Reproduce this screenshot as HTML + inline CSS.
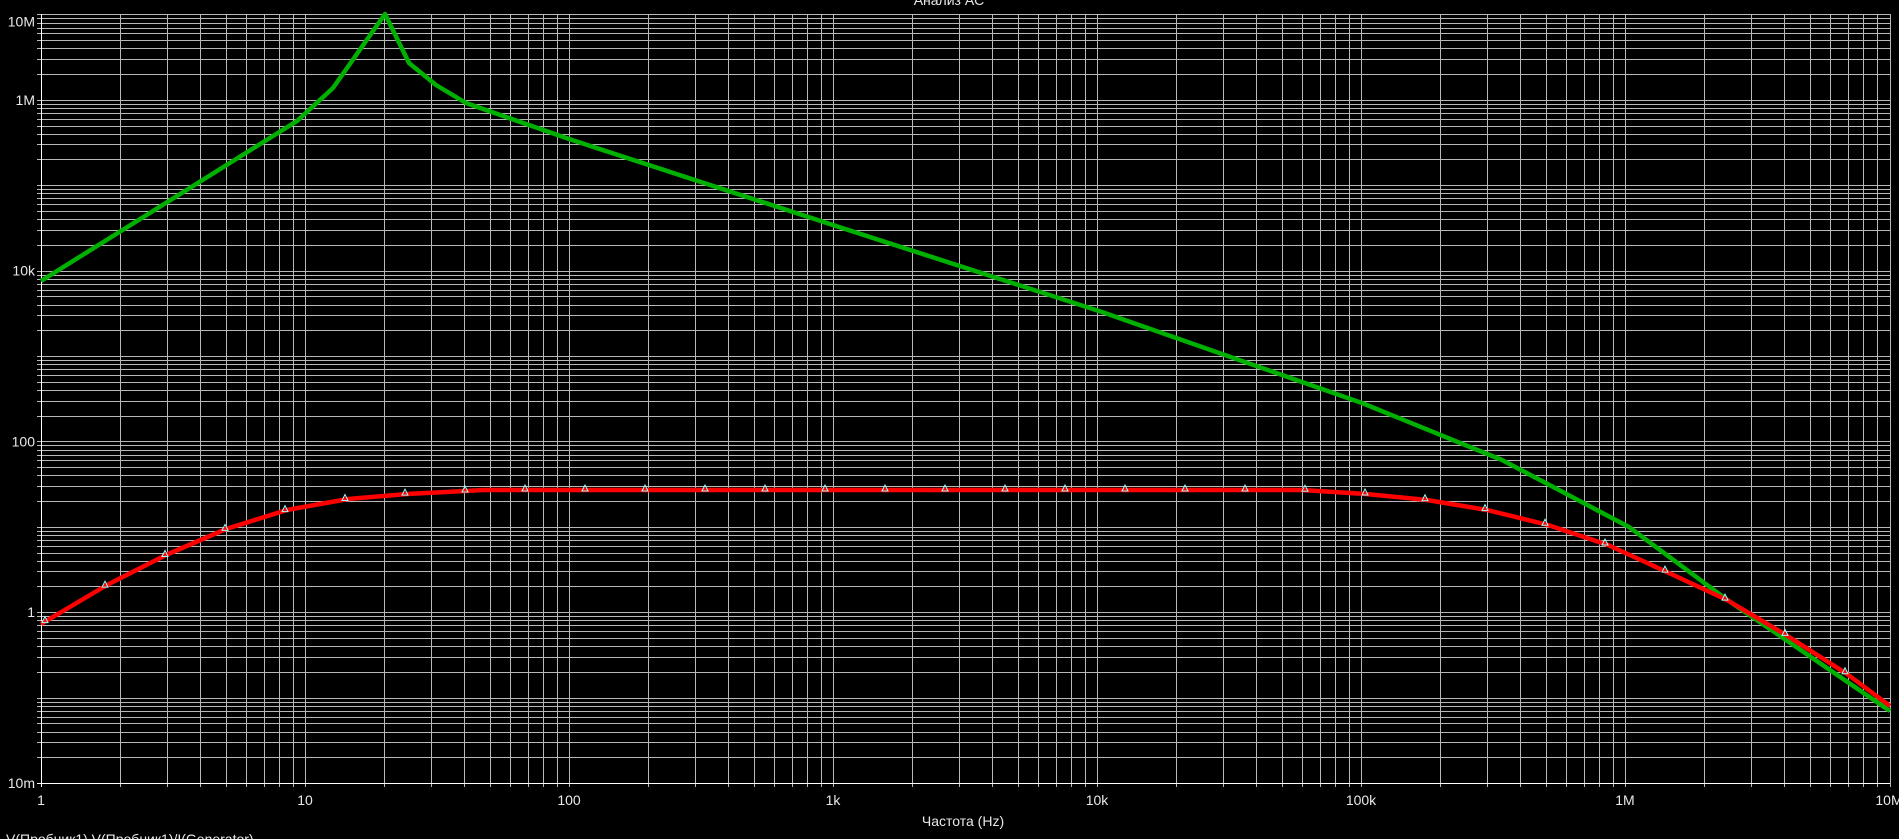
<!DOCTYPE html>
<html><head><meta charset="utf-8"><style>
html,body{margin:0;padding:0;background:#000;width:1899px;height:839px;overflow:hidden}
svg{display:block}
text{font-family:"Liberation Sans",sans-serif;font-size:14px;fill:#e8e8e8}
</style></head><body>
<svg id="s" width="1899" height="839" viewBox="0 0 1899 839" xmlns="http://www.w3.org/2000/svg">
<g id="grid" stroke="#b8b8b8" stroke-width="1" shape-rendering="crispEdges"></g>
<text x="949" y="5" text-anchor="middle" font-size="16">Анализ AC</text>
<g id="lab"></g>
<polyline fill="none" stroke="#00b000" stroke-width="4.5" stroke-linejoin="round" points="41,281 297,121 333,88 385,14 409,63 436,85 466,103 569,139 836,226 1102,312 1362,403 1502,460 1629,527 1726,599 1890,711"/>
<polyline fill="none" stroke="#ff0000" stroke-width="4.5" stroke-linejoin="round" points="41,624 107,585 166,555 226,529 287,510 348,499 407,494 484,490 1302,490 1366,494 1427,500 1487,510 1548,525 1608,545 1669,573 1727,600 1786,635 1847,674 1890,706"/>
<g id="mk" fill="none" stroke="#9ff" stroke-width="1"></g>
<text x="963" y="826" text-anchor="middle" font-size="15">Частота (Hz)</text>
<text transform="translate(-3,395) rotate(-90)" style="fill:#d01010" font-size="14" text-anchor="middle">Амплитуда</text>
<text x="6" y="844" font-size="13">V(Пробник1)    V(Пробник1)/I(Generator)</text>
</svg>
<script>
var L=41,R=1890,B=783,T=14,DX=264,DY=85.4,g=document.getElementById('grid'),lab=document.getElementById('lab'),ns='http://www.w3.org/2000/svg';
function ln(x1,y1,x2,y2,c){var e=document.createElementNS(ns,'line');e.setAttribute('x1',x1);e.setAttribute('y1',y1);e.setAttribute('x2',x2);e.setAttribute('y2',y2);if(c)e.setAttribute('stroke',c);g.appendChild(e);}
function tx(x,y,t,a){var e=document.createElementNS(ns,'text');e.setAttribute('x',x);e.setAttribute('y',y);e.setAttribute('text-anchor',a);e.textContent=t;lab.appendChild(e);}
for(var d=0;d<7;d++)for(var k=1;k<10;k++){var x=Math.round(L+DX*(d+Math.log10(k)))+0.5;ln(x,T,x,B+4);}
ln(R+0.5,T,R+0.5,B+4);
for(var d=0;d<9;d++)for(var k=1;k<10;k++){var y=Math.round(B-DY*(d+Math.log10(k)))+0.5;ln(L-4,y,R,y);}
ln(L-4,T+0.5,R,T+0.5);
ln(L+0.5,T,L+0.5,B+4,'#fff');ln(L-4,B+0.5,R,B+0.5,'#fff');
var xl=['1','10','100','1k','10k','100k','1M','10M'];
for(var i=0;i<8;i++)tx(L+DX*i,805,xl[i],'middle');
var yl=[['10m',0],['1',2],['100',4],['10k',6],['1M',8],['10M',9]];
yl.forEach(function(p){tx(35,B-DY*p[1]+5+(p[1]==9?7:0),p[0],'end');});
var red=[[41,624],[107,585],[166,555],[226,529],[287,510],[348,499],[407,494],[484,490],[1302,490],[1366,494],[1427,500],[1487,510],[1548,525],[1608,545],[1669,573],[1727,600],[1786,635],[1847,674],[1890,706]];
function ry(x){for(var i=1;i<red.length;i++)if(x<=red[i][0]){var a=red[i-1],b=red[i];return a[1]+(b[1]-a[1])*(x-a[0])/(b[0]-a[0]);}return 706;}
var mk=document.getElementById('mk');
for(var x=45;x<1880;x+=60){var y=ry(x)-2;var p=document.createElementNS(ns,'polygon');p.setAttribute('points',(x-3)+','+(y+3)+' '+x+','+(y-3)+' '+(x+3)+','+(y+3));mk.appendChild(p);}
</script>
</body></html>
